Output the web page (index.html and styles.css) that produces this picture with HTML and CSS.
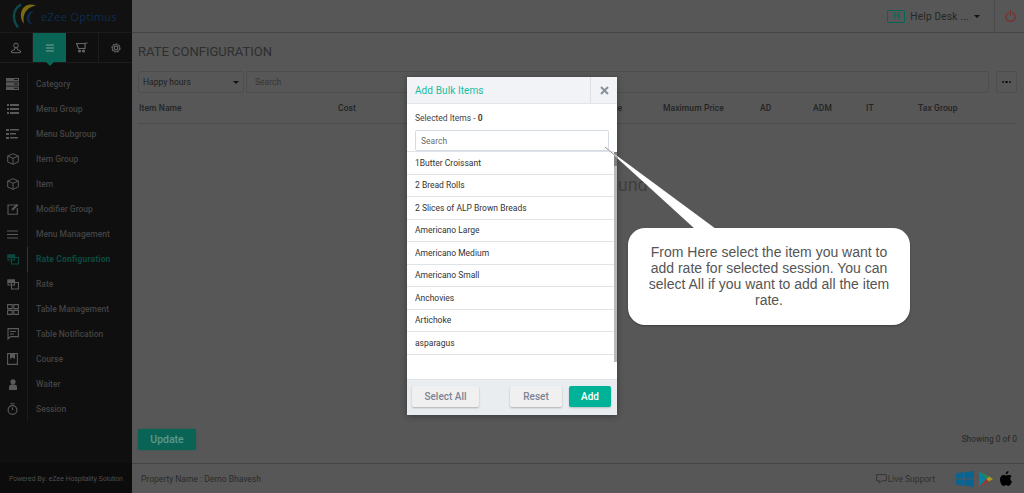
FILE: index.html
```html
<!DOCTYPE html>
<html lang="en">
<head>
<meta charset="utf-8">
<title>Rate Configuration</title>
<link rel="stylesheet" href="styles.css">
</head>
<body>
<div class="app">
  <aside class="sidebar">
    <div class="logo">
      <svg class="logo-mark" width="24" height="26" viewBox="0 0 24 26" fill="none">
        <path d="M9 1.500C1 6 -.5 16 6 24.500" stroke="#0c4a4a" stroke-width="2.400"/>
        <path d="M24 2.500C15 -1 8 5 9 14c.3 3 1.500 5 3 6.500C10 11 15 4 24 2.500Z" fill="#7a6a12"/>
        <path d="M22 8c-5 0-8 4-7 9 .5 2.500 3 4.500 6.500 4.500C16 19 16 12 22 8Z" fill="#0b2a4c"/>
      </svg>
      <span class="logo-text">eZee Optimus</span>
    </div>
    <nav class="tabs">
      <div class="tab">
        <svg width="12" height="12" viewBox="0 0 12 12" fill="none" stroke="#6a6a6a" stroke-width="1"><circle cx="6" cy="3.500" r="2.300"/><path d="M4.800 6v1.400L1.500 9v1.700h9V9L7.200 7.400V6"/></svg>
      </div>
      <div class="tab tab-active">
        <svg width="10" height="8" viewBox="0 0 10 8" fill="none" stroke="#7f9f98" stroke-width="1.200"><path d="M1 1h8M1 4h8M1 7h8"/></svg>
      </div>
      <div class="tab">
        <svg width="12" height="11" viewBox="0 0 12 11" fill="none" stroke="#666" stroke-width="1.200"><path d="M.5 1.500h8.500v5H2.500zM9 1.500 11.500.7"/><circle cx="3.500" cy="9" r=".9" fill="#666"/><circle cx="7.500" cy="9" r=".9" fill="#666"/></svg>
      </div>
      <div class="tab">
        <svg width="12" height="12" viewBox="0 0 12 12" fill="none" stroke="#666" stroke-width="1.200"><circle cx="6" cy="6" r="1.800"/><circle cx="6" cy="6" r="4" stroke-dasharray="2 1"/><circle cx="6" cy="6" r="3.600" stroke-width=".7"/></svg>
      </div>
    </nav>
    <ul class="menu">
      <li class="menu-item"><span class="menu-icon"><svg width="13" height="12" viewBox="0 0 13 12" fill="#585858"><path d="M0 0h13v3.400H0zM0 4.300h13v3.400H0zM0 8.600h13V12H0z"/><path d="M8 1h4v1H8zM8 5.500h4v1H8zM8 9.800h4v1H8z" fill="#111"/></svg></span><span>Category</span></li>
      <li class="menu-item"><span class="menu-icon"><svg width="12" height="10" viewBox="0 0 12 10" fill="#5a5a5a"><path d="M0 0h2v2H0zM3 0h9v2H3zM0 4h2v2H0zM3 4h9v2H3zM0 8h2v2H0zM3 8h9v2H3z"/></svg></span><span>Menu Group</span></li>
      <li class="menu-item"><span class="menu-icon"><svg width="13" height="10" viewBox="0 0 13 10" fill="#5a5a5a"><path d="M0 0h3v2H0zM4 0h9v1.500H4zM0 4h3v2H0zM4 4h6v1.500H4zM0 8h3v2H0zM4 8h8v1.500H4z"/></svg></span><span>Menu Subgroup</span></li>
      <li class="menu-item"><span class="menu-icon"><svg width="12" height="12" viewBox="0 0 12 12" fill="none" stroke="#5a5a5a" stroke-width="1"><path d="M6 .7 11.300 3v6L6 11.300.7 9V3zM.7 3 6 5.300 11.300 3M6 5.300v6"/></svg></span><span>Item Group</span></li>
      <li class="menu-item"><span class="menu-icon"><svg width="12" height="12" viewBox="0 0 12 12" fill="none" stroke="#5a5a5a" stroke-width="1"><path d="M6 .7 11.300 3v6L6 11.300.7 9V3zM.7 3 6 5.300 11.300 3M6 5.300v6"/></svg></span><span>Item</span></li>
      <li class="menu-item"><span class="menu-icon"><svg width="12" height="12" viewBox="0 0 12 12" fill="none" stroke="#5a5a5a" stroke-width="1.100"><path d="M9 2H1v9.300h9.300V5"/><path d="M4.500 7.500 5 5.500 10 .8l1.400 1.400L6.500 7z" fill="#5a5a5a" stroke="none"/></svg></span><span>Modifier Group</span></li>
      <li class="menu-item"><span class="menu-icon"><svg width="11" height="9" viewBox="0 0 11 9" fill="none" stroke="#5a5a5a" stroke-width="1.200"><path d="M0 1h11M0 4.500h11M0 8h11"/></svg></span><span>Menu Management</span></li>
      <li class="menu-item menu-item-active"><span class="menu-icon"><svg width="12" height="11" viewBox="0 0 12 11" fill="none" stroke="#0b4a3f" stroke-width="1.100"><path d="M1 1h6.500v5H1zM4.500 3.500h7v6.500h-7z"/><path d="M1 1h6.500v2.500H1z" fill="#0b4a3f"/></svg></span><span>Rate Configuration</span></li>
      <li class="menu-item"><span class="menu-icon"><svg width="12" height="11" viewBox="0 0 12 11" fill="none" stroke="#5a5a5a" stroke-width="1.100"><path d="M1 1h6.500v5H1zM4.500 3.500h7v6.500h-7z"/><path d="M1 1h6.500v2.500H1z" fill="#5a5a5a"/></svg></span><span>Rate</span></li>
      <li class="menu-item"><span class="menu-icon"><svg width="12" height="11" viewBox="0 0 12 11" fill="none" stroke="#5a5a5a" stroke-width="1.100"><path d="M.6.6h4.600v4H.6zM6.800.6h4.600v4H6.800zM.6 6.400h4.600v4H.6zM6.800 6.400h4.600v4H6.800z"/></svg></span><span>Table Management</span></li>
      <li class="menu-item"><span class="menu-icon"><svg width="12" height="12" viewBox="0 0 12 12" fill="none" stroke="#5a5a5a" stroke-width="1.100"><path d="M.6.6h10.800v8H3.500L1 11V.6z"/><path d="M3 3.500h6M3 6h4"/></svg></span><span>Table Notification</span></li>
      <li class="menu-item"><span class="menu-icon"><svg width="11" height="12" viewBox="0 0 11 12" fill="none" stroke="#5a5a5a" stroke-width="1.100"><path d="M.6.6h9.800v10.800H.6z"/><path d="M3 .6h5v5.500L5.500 4.500 3 6.100z" fill="#5a5a5a" stroke="none"/></svg></span><span>Course</span></li>
      <li class="menu-item"><span class="menu-icon"><svg width="10" height="11" viewBox="0 0 10 11" fill="#5a5a5a"><circle cx="5" cy="2.800" r="2.600"/><path d="M1 11V7.500C1 6 3 5.500 5 5.500s4 .5 4 2V11z"/></svg></span><span>Waiter</span></li>
      <li class="menu-item"><span class="menu-icon"><svg width="11" height="12" viewBox="0 0 11 12" fill="none" stroke="#5a5a5a" stroke-width="1.100"><circle cx="5.500" cy="7" r="4.400"/><path d="M3.500.7h4M5.500 7V4.500"/></svg></span><span>Session</span></li>
    </ul>
    <div class="powered">Powered By: eZee Hospitality Solution</div>
  </aside>

  <div class="main">
    <header class="topbar">
      <span class="help-badge">H</span>
      <span class="help-text">Help Desk ...</span>
      <span class="caret"></span>
      <span class="power">
        <svg width="11" height="12" viewBox="0 0 11 12" fill="none" stroke="#7c2a2a" stroke-width="1.100"><path d="M3.500 2.700a4.600 4.600 0 1 0 4 0M5.500.5v5"/></svg>
      </span>
    </header>
    <section class="content">
      <h1 class="title">RATE CONFIGURATION</h1>
      <div class="filters">
        <div class="select"><span>Happy hours</span><span class="caret"></span></div>
        <div class="search-box">Search</div>
        <div class="more"><i></i><i></i><i></i></div>
      </div>
      <div class="table-head">
        <span>Item Name</span><span>Cost</span><span>Minimum Price</span><span>Maximum Price</span><span>AD</span><span>ADM</span><span>IT</span><span>Tax Group</span>
      </div>
      <div class="empty">No Record Found</div>
      <div class="actions">
        <button class="update" type="button">Update</button>
        <span class="showing">Showing 0 of 0</span>
      </div>
    </section>
    <footer class="footer">
      <span class="property">Property Name : Demo Bhavesh</span>
      <span class="support">
        <svg width="11" height="10" viewBox="0 0 12 11" fill="none" stroke="#333" stroke-width="1"><path d="M.6.6h10.800v6.800H6.500L3.500 10V7.400H.6z"/></svg>
        Live Support
      </span>
      <span class="stores">
        <svg width="18" height="16" viewBox="0 0 18 16" fill="#0b6390"><path d="M0 2.400 7.300 1.300v6.200H0zM8.200 1.200 18 0v7.500H8.200zM0 8.400h7.300v6.300L0 13.600zM8.200 8.400H18V16l-9.800-1.400z"/></svg>
        <svg width="14" height="16" viewBox="0 0 14 16"><path d="M0 0 7.500 8 0 16z" fill="#0a7fa0"/><path d="M0 0 10 5.500 7.500 8z" fill="#1e8a5e"/><path d="M0 16 10 10.500 7.500 8z" fill="#a8342f"/><path d="M10 5.500 14 8l-4 2.500L7.500 8z" fill="#b0951f"/></svg>
        <svg width="12" height="15" viewBox="0 0 12 15" fill="#000"><path d="M8.500 0C8.600 1.700 7.300 3.300 5.800 3.200 5.700 1.700 7 .2 8.500 0zM11.700 5.200c-2 1.300-1.700 4.200.3 5.200-.7 1.900-2 4.500-3.500 4.500-.9 0-1.400-.6-2.500-.6s-1.700.6-2.500.6C2 14.900 0 11.400 0 8.400c0-3 1.900-4.500 3.500-4.500 1.100 0 1.900.7 2.600.7s1.700-.8 3-.7c1.100 0 2 .5 2.600 1.300z"/></svg>
      </span>
    </footer>
  </div>
</div>

<div class="modal">
  <div class="modal-head">
    <span class="modal-title">Add Bulk Items</span>
    <span class="modal-close">
      <svg width="9" height="9" viewBox="0 0 9 9" fill="none" stroke="#8a9097" stroke-width="2"><path d="M1 1l7 7M8 1 1 8"/></svg>
    </span>
  </div>
  <div class="modal-body">
    <div class="selected">Selected Items - <b>0</b></div>
    <div class="modal-search">Search</div>
  </div>
  <div class="list-wrap">
    <ul class="list">
      <li>1Butter Croissant</li>
      <li>2 Bread Rolls</li>
      <li>2 Slices of ALP Brown Breads</li>
      <li>Americano Large</li>
      <li>Americano Medium</li>
      <li>Americano Small</li>
      <li>Anchovies</li>
      <li>Artichoke</li>
      <li>asparagus</li>
    </ul>
    <div class="scrollbar"></div>
  </div>
  <div class="modal-foot">
    <button class="btn btn-grey btn-all" type="button">Select All</button>
    <button class="btn btn-grey" type="button">Reset</button>
    <button class="btn btn-add" type="button">Add</button>
  </div>
</div>

<svg class="tail" width="130" height="90" viewBox="0 0 130 90">
  <path d="M2 1 92 83H113Z" fill="#fff"/>
  <path d="M2 1 15 12" fill="none" stroke="#8f8f8f" stroke-width="1"/>
</svg>
<div class="callout">From Here select the item you want to add rate for selected session. You can select All if you want to add all the item rate.</div>
</body>
</html>
```

FILE: styles.css
```css
* { box-sizing: border-box; }
html, body { margin: 0; height: 100%; overflow: hidden; }
body { font-family: Roboto, "Liberation Sans", sans-serif; color: #2a2a2a; background: #575757; }
ul { list-style: none; margin: 0; padding: 0; }

.app { display: flex; height: 493px; }

/* Sidebar */
.sidebar { width: 132px; flex: none; background: #0f0f0f; display: flex; flex-direction: column; }
.logo { height: 33px; flex: none; display: flex; align-items: center; padding-left: 12px; border-bottom: 1px solid #1c1c1c; background: #111; }
.logo-mark { margin-right: 5px; flex: none; }
.logo-text { font: 11px/1 "Open Sans", sans-serif; letter-spacing: .35px; color: #0b2d50; white-space: nowrap; }
.tabs { display: grid; grid-template-columns: 33px 33px 33px 33px; height: 30px; flex: none; border-bottom: 1px solid #1c1c1c; }
.tab { display: flex; align-items: center; justify-content: center; position: relative; border-right: 1px solid #1c1c1c; }
.tab:last-child { border-right: 0; }
.tab-active { background: #0a6455; border-right: 0; }
.tab-active::after { content: ""; position: absolute; left: 13px; top: 100%; border: 4px solid transparent; border-top-color: #0a6455; border-bottom: 0; }
.menu { margin-top: 8.500px; height: 350px; flex: none; }
.menu-item { display: flex; align-items: center; height: 25px; font-size: 8.500px; font-weight: 500; color: #434343; }
.menu-icon { width: 28px; height: 100%; flex: none; display: flex; align-items: center; justify-content: center; padding-right: 2px; border-right: 1px solid #1a1a1a; margin-right: 8px; }
.menu-item-active { color: #0b4a3f; font-weight: 700; letter-spacing: .15px; }
.menu-item-active .menu-icon { border-right-color: #0b4a3f; }
.powered { margin-top: auto; height: 30px; display: flex; align-items: center; padding-left: 9px; font: 6.700px "Liberation Sans", sans-serif; color: #505050; background: #0c0c0c; white-space: nowrap; }

/* Main */
.main { flex: 1; min-width: 0; display: flex; flex-direction: column; background: #575757; }
.topbar { height: 33px; flex: none; display: flex; align-items: center; justify-content: flex-end; border-bottom: 1px solid #444; }
.help-badge { width: 18px; height: 13px; border: 1px solid #0a6455; border-radius: 1px; display: flex; align-items: center; justify-content: center; font-size: 9px; line-height: 1; color: #0a6455; margin-right: 5px; }
.help-text { font-size: 10px; letter-spacing: .25px; color: #262626; margin-right: 5px; }
.caret { width: 0; height: 0; border: 3px solid transparent; border-top: 3px solid #111; border-bottom: 0; }
.power { width: 30px; height: 33px; margin-left: 14px; border-left: 1px solid #4b4b4b; display: flex; align-items: center; justify-content: center; padding-left: 1px; }
.content { flex: 1; display: flex; flex-direction: column; padding: 0 7px 0 6px; }
.title { margin: 11px 0 0; font-size: 13px; font-weight: 400; line-height: 15px; color: #2e2e2e; letter-spacing: 0; }
.filters { display: flex; margin-top: 12px; height: 22px; gap: 2px; }
.select { width: 106px; border: 1px solid #4e4e4e; border-radius: 2px; display: flex; align-items: center; justify-content: space-between; padding: 0 4px; font-size: 8.500px; color: #1e1e1e; }
.search-box { flex: 1; border: 1px solid #4e4e4e; border-radius: 2px; display: flex; align-items: center; padding-left: 8px; font-size: 8.500px; color: #363636; margin-right: 5px; }
.more { width: 21px; border: 1px solid #4e4e4e; border-radius: 2px; display: flex; align-items: center; justify-content: center; gap: 1px; }
.more i { width: 2.500px; height: 2.500px; border-radius: 50%; background: #111; }
.table-head { display: grid; grid-template-columns: 199px 225px 100px 97px 53px 53px 52px 1fr; padding: 9px 0 9px 1px; height: 31px; border-bottom: 1px solid #4c4c4c; font-size: 8.500px; font-weight: 500; line-height: 13px; letter-spacing: .1px; color: #242424; }
.empty { flex: 1; text-align: center; font-size: 18px; color: #404040; padding-top: 50px; padding-left: 2px; }
.actions { display: flex; align-items: center; justify-content: space-between; height: 42px; padding-bottom: 6px; }
.update { width: 58px; height: 21px; border: 0; border-radius: 1px; background: #0a6455; color: #5c9a8f; font: 500 10.500px Roboto, sans-serif; box-shadow: 0 0 2px rgba(10,100,85,.6); }
.showing { font-size: 8.400px; color: #262626; }
.footer { height: 30px; flex: none; display: flex; align-items: center; border-top: 1px solid #444; padding: 0 12px 0 9px; font-size: 8.500px; color: #2a2a2a; }
.support { margin-left: auto; display: flex; align-items: center; gap: 1px; color: #303030; }
.stores { display: flex; align-items: center; gap: 5px; margin-left: 21px; }
.stores svg:last-child { margin-left: 2px; }

/* Modal */
.modal { position: absolute; left: 407px; top: 77px; width: 210px; height: 338px; background: #fff; display: flex; flex-direction: column; box-shadow: 0 1px 6px rgba(0,0,0,.35); }
.modal-head { height: 27px; flex: none; display: flex; align-items: stretch; justify-content: space-between; background: #f1f3f6; border-bottom: 1px solid #e2e6ea; }
.modal-title { align-self: center; padding-left: 8px; font-size: 10px; letter-spacing: .1px; color: #18bda3; }
.modal-close { width: 27px; display: flex; align-items: center; justify-content: center; border-left: 1px solid #dcdfe3; }
.modal-body { padding: 8px 8px 0; flex: none; }
.selected { font-size: 8.500px; line-height: 13px; color: #444; }
.selected b { font-weight: 700; }
.modal-search { margin-top: 5px; height: 21px; border: 1px solid #d5dbe2; border-radius: 2px; display: flex; align-items: center; padding-left: 5px; font-size: 8.500px; color: #6e6e6e; }
.list-wrap { position: relative; flex: 1; min-height: 0; }
.list { width: 207px; border-top: 1px solid #dfe3e7; }
.list li { height: 22.500px; display: flex; align-items: center; padding-left: 8px; font-size: 8.500px; color: #333; border-bottom: 1px solid #dfe3e7; }
.scrollbar { position: absolute; right: 0; top: 1px; width: 3px; height: 210px; background: #b8b8b8; }
.scrollbar::before { content: ""; display: block; height: 14px; background: #7f7f7f; }
.modal-foot { height: 36px; flex: none; display: flex; align-items: center; padding: 0 6px 3px 5px; background: #e9edf0; border-top: 1px solid #dfe3e7; gap: 7px; }
.btn { height: 21px; border: 0; border-radius: 2px; font: 500 10px Roboto, sans-serif; }
.btn-grey { background: #f0f0f1; color: #7b8493; box-shadow: 0 1px 2px rgba(0,0,0,.25); width: 52px; }
.btn-all { width: 67px; margin-right: auto; }
.btn-add { width: 42px; background: #00b398; color: #fff; box-shadow: 0 1px 2px rgba(0,0,0,.2); }

/* Callout */
.tail { position: absolute; left: 603px; top: 146px; }
.callout { position: absolute; left: 628px; top: 228px; width: 282px; height: 97px; padding: 16px 18px 0; background: #fff; border-radius: 17px; text-align: center; font: 14px/16px "Liberation Sans", sans-serif; color: #555; box-shadow: 0 1px 2px rgba(0,0,0,.3); }
```
